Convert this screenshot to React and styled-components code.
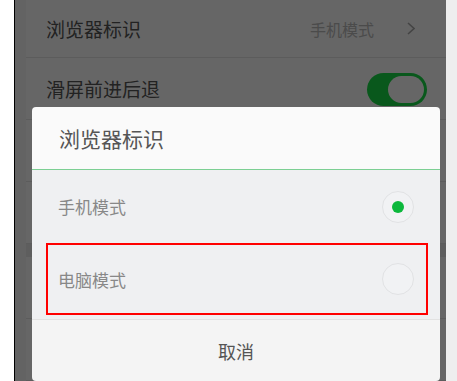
import React from 'react';
import styled, { createGlobalStyle } from 'styled-components';

const GlobalStyle = createGlobalStyle`
  html, body {
    margin: 0;
    padding: 0;
    background: #ffffff;
    font-family: "Noto Sans CJK SC", "Noto Sans", sans-serif;
  }
  * { box-sizing: border-box; }
`;

const Screen = styled.div`
  display: flex;
  width: 457px;
  height: 381px;
  overflow: hidden;
`;

const Gutter = styled.div`
  width: 14px;
  background: #ffffff;
`;

const Phone = styled.div`
  position: relative;
  flex: 1;
  display: flex;
  border-left: 1px solid #000000;
  border-right: 11px solid #eeeeee;
  padding-left: 11px;
  background: #f8f8f8;
`;

const SettingsList = styled.div`
  flex: 1;
  display: flex;
  flex-direction: column;
  background: #ffffff;
`;

const SettingRow = styled.div`
  display: flex;
  align-items: center;
  height: ${props => props.height || 62}px;
  padding: 0 19px 0 20px;
  border-bottom: 1px solid #e6e6e6;
  flex-shrink: 0;
`;

const SectionGap = styled.div`
  height: 13px;
  background: #ebebeb;
  flex-shrink: 0;
`;

const SettingLabel = styled.span`
  flex: 1;
  font-size: 19px;
  color: #555555;
`;

const SettingValue = styled.span`
  font-size: 16px;
  color: #bbbbbb;
  margin-right: 33px;
`;

const Chevron = styled.svg`
  width: 8px;
  height: 13px;
  margin-right: 12px;
`;

const Toggle = styled.div`
  display: flex;
  justify-content: flex-end;
  align-items: center;
  width: 60px;
  height: 33px;
  padding: 3px;
  border-radius: 17px;
  background: #18dc46;
  margin-top: 1px;
`;

const Knob = styled.div`
  width: 36px;
  height: 27px;
  border-radius: 14px;
  background: #ffffff;
`;

const Mask = styled.div`
  position: absolute;
  inset: 0;
  background: rgba(0, 0, 0, 0.6);
`;

const Dialog = styled.div`
  position: absolute;
  left: 17px;
  top: 107px;
  width: 408px;
  border-radius: 4px;
  overflow: hidden;
  display: flex;
  flex-direction: column;
`;

const DialogTitle = styled.div`
  height: 63px;
  display: flex;
  align-items: center;
  padding-left: 27px;
  background: #fafafa;
  border-bottom: 1px solid #7ccf93;
  font-size: 21px;
  color: #555555;
`;

const OptionList = styled.div`
  display: flex;
  flex-direction: column;
  padding: 0 12px 4px 14px;
  background: #eff0f2;
`;

const Option = styled.div`
  display: flex;
  align-items: center;
  justify-content: space-between;
  height: ${props => (props.marked ? 72 : 73)}px;
  padding: 0 ${props => (props.marked ? 12 : 14)}px 0 ${props => (props.marked ? 10 : 12)}px;
  border: ${props => (props.marked ? '2px solid #ff0000' : 'none')};
  font-size: 17px;
  color: #888888;
`;

const Radio = styled.span`
  display: flex;
  align-items: center;
  justify-content: center;
  width: 32px;
  height: 32px;
  border-radius: 50%;
  border: 1px solid #e1e2e4;
  background: #f1f2f4;

  &::after {
    content: '';
    display: ${props => (props.checked ? 'block' : 'none')};
    width: 12px;
    height: 12px;
    border-radius: 50%;
    background: #0cb83c;
  }
`;

const CancelButton = styled.div`
  height: 62px;
  display: flex;
  align-items: center;
  justify-content: center;
  border-top: 1px solid #e2e2e2;
  background: #f4f4f4;
  font-size: 18px;
  color: #555555;
`;

const options = [
  { label: '手机模式', checked: true },
  { label: '电脑模式', checked: false, marked: true },
];

export default function App() {
  return (
    <>
      <GlobalStyle />
      <Screen>
        <Gutter />
        <Phone>
          <SettingsList>
            <SettingRow height={58}>
              <SettingLabel>浏览器标识</SettingLabel>
              <SettingValue>手机模式</SettingValue>
              <Chevron viewBox="0 0 8 13">
                <path d="M1 1l6 5.5L1 12" fill="none" stroke="#aaaaaa" strokeWidth="1.6" />
              </Chevron>
            </SettingRow>
            <SettingRow>
              <SettingLabel>滑屏前进后退</SettingLabel>
              <Toggle>
                <Knob />
              </Toggle>
            </SettingRow>
            {/* rows hidden behind the dialog */}
            <SettingRow />
            <SettingRow />
            <SectionGap />
            <SettingRow />
            <SettingRow />
          </SettingsList>
          <Mask />
          <Dialog>
            <DialogTitle>浏览器标识</DialogTitle>
            <OptionList>
              {options.map(opt => (
                <Option key={opt.label} marked={opt.marked}>
                  {opt.label}
                  <Radio checked={opt.checked} />
                </Option>
              ))}
            </OptionList>
            <CancelButton>取消</CancelButton>
          </Dialog>
        </Phone>
      </Screen>
    </>
  );
}
